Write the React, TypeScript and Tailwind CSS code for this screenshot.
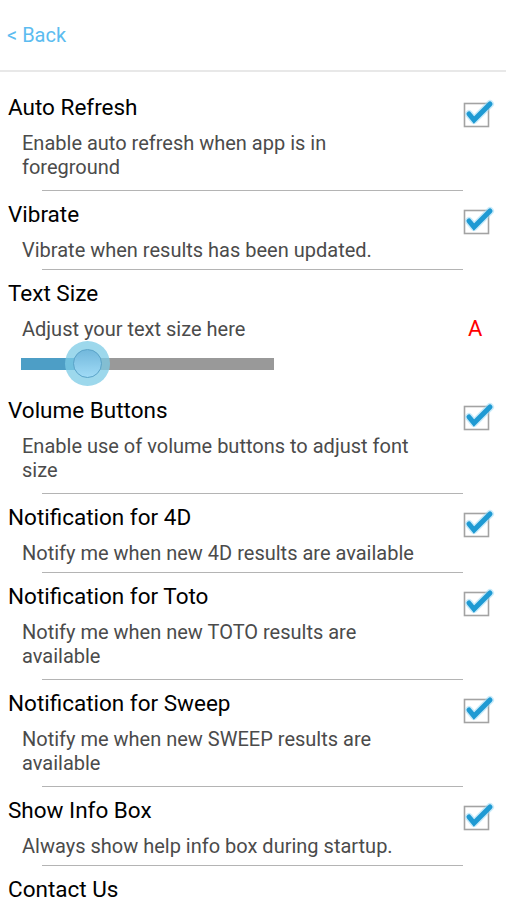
import React from "react";

function Check() {
  return (
    <svg width="32" height="32" viewBox="0 0 32 32" className="block">
      <rect x="1.5" y="5.5" width="24" height="23" fill="#ffffff" stroke="#a3a3a3" strokeWidth="1.6" />
      <polyline points="6,16 11,22 27,6" fill="none" stroke="#9fdaf5" strokeWidth="8" strokeLinecap="round" strokeLinejoin="round" opacity="0.55" />
      <polyline points="6,16 11,22 27,6" fill="none" stroke="#1f9ad3" strokeWidth="5" strokeLinecap="round" strokeLinejoin="miter" />
    </svg>
  );
}

function Sep() {
  return <div className="ml-[42px] w-[421px] h-px bg-[#b4b4b4]" />;
}

type ItemProps = {
  title: string;
  lines: string[];
  first?: boolean;
};

function Item({ title, lines, first }: ItemProps) {
  return (
    <div className={`flex ${first ? "pt-[21px]" : "pt-[9px]"} ${lines.length > 1 ? "pb-[11px]" : "pb-[7px]"}`}>
      <div className="flex-1">
        <div className="h-[28px] leading-[29px] pl-[8px] text-[22.5px] text-black whitespace-nowrap">{title}</div>
        <div className="mt-[10px] pl-[22px] text-[20px] leading-[24px] text-[#4b4b4b]">
          {lines.map((l, i) => (
            <div key={i} className="whitespace-nowrap">{l}</div>
          ))}
        </div>
      </div>
      <div className="w-[43px] pt-[5px]">
        <Check />
      </div>
    </div>
  );
}

export default function App() {
  return (
    <div className="w-[506px] h-[900px] overflow-hidden bg-white" style={{ fontFamily: "Roboto, 'Noto Sans', sans-serif" }}>
      <div className="h-[72px] flex items-center pl-[7px] pb-[1px] text-[20px] text-[#5cbcf0] border-b-2 border-[#e8e8e8]">
        &lt; Back
      </div>
      <Item first title="Auto Refresh" lines={["Enable auto refresh when app is in", "foreground"]} />
      <Sep />
      <Item title="Vibrate" lines={["Vibrate when results has been updated."]} />
      <Sep />
      <div className="pt-[9px]">
        <div className="h-[28px] leading-[29px] pl-[8px] text-[22.5px] text-black">Text Size</div>
        <div className="mt-[10px] flex items-center h-[24px]">
          <div className="flex-1 pl-[22px] text-[20px] leading-[24px] text-[#4b4b4b]">Adjust your text size here</div>
          <div className="w-[38px] text-[22px] leading-[24px] text-[#ff0000]">A</div>
        </div>
        <div className="h-[46px] flex items-center pl-[21px]">
          <div className="relative w-[253px] h-[12px] flex">
            <div className="w-[66px] h-full bg-[#4d9ec6]" />
            <div className="flex-1 h-full bg-[#999999]" />
            <div className="absolute left-[44px] top-[-17px] w-[45px] h-[45px] rounded-full bg-[#7ccbe6] opacity-75" />
            <div className="absolute left-[52px] top-[-9px] w-[29px] h-[29px] rounded-full bg-gradient-to-b from-[#72b8dc] to-[#a0dbf6] border border-[#5aa3c8]" />
          </div>
        </div>
      </div>
      <Item title="Volume Buttons" lines={["Enable use of volume buttons to adjust font", "size"]} />
      <Sep />
      <Item title="Notification for 4D" lines={["Notify me when new 4D results are available"]} />
      <Sep />
      <Item title="Notification for Toto" lines={["Notify me when new TOTO results are", "available"]} />
      <Sep />
      <Item title="Notification for Sweep" lines={["Notify me when new SWEEP results are", "available"]} />
      <Sep />
      <Item title="Show Info Box" lines={["Always show help info box during startup."]} />
      <Sep />
      <div className="pt-[9px]">
        <div className="h-[28px] leading-[29px] pl-[8px] text-[22.5px] text-black">Contact Us</div>
      </div>
    </div>
  );
}
